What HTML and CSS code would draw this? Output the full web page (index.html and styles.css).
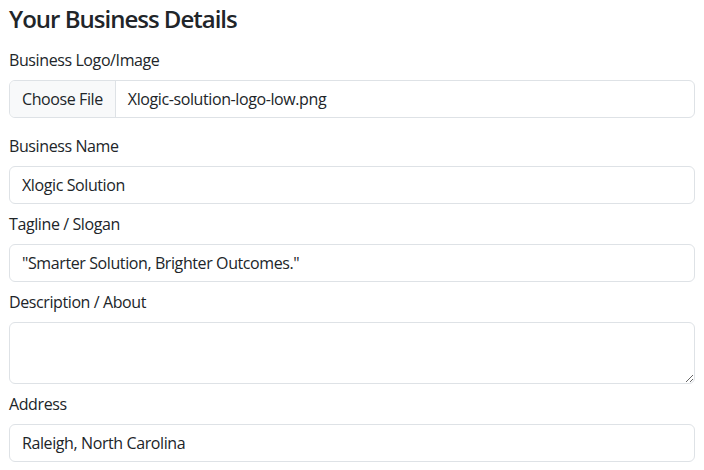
FILE: index.html
```html
<!DOCTYPE html>
<html lang="en">
<head>
<meta charset="utf-8">
<title>Your Business Details</title>
<link rel="stylesheet" href="styles.css">
</head>
<body>
<div class="page">
  <h4 class="title">Your Business Details</h4>
  <div class="group group-first">
    <label class="label">Business Logo/Image</label>
    <div class="file-input">
      <span class="file-btn">Choose File</span>
      <span class="file-name">Xlogic-solution-logo-low.png</span>
    </div>
  </div>
  <div class="group">
    <label class="label" for="bname">Business Name</label>
    <input class="control" id="bname" type="text" value="Xlogic Solution">
  </div>
  <div class="group">
    <label class="label" for="tagline">Tagline / Slogan</label>
    <input class="control" id="tagline" type="text" value="&quot;Smarter Solution, Brighter Outcomes.&quot;">
  </div>
  <div class="group">
    <label class="label" for="desc">Description / About</label>
    <textarea class="control textarea" id="desc" rows="2"></textarea>
  </div>
  <div class="group">
    <label class="label" for="addr">Address</label>
    <input class="control" id="addr" type="text" value="Raleigh, North Carolina">
  </div>
</div>
</body>
</html>
```
FILE: styles.css
```css
html, body {
  margin: 0;
  padding: 0;
  background: #ffffff;
}
body {
  font-family: "Open Sans", "Noto Sans", "Liberation Sans", sans-serif;
  font-size: 16px;
  line-height: 24px;
  letter-spacing: -0.4px;
  color: #212529;
}
.page {
  padding: 4px 9px 0 9px;
}
.title {
  margin: 0 0 15px 0;
  font-size: 24px;
  line-height: 29px;
  font-weight: 600;
  letter-spacing: -1px;
  color: #212529;
}
.group {
  margin-bottom: 8px;
}
.group-first {
  margin-bottom: 16px;
}
.label {
  display: block;
  margin-bottom: 8px;
  font-size: 16px;
  line-height: 24px;
}
.control {
  display: block;
  box-sizing: border-box;
  width: 100%;
  height: 38px;
  margin: 0;
  padding: 6px 12px;
  font-family: inherit;
  font-size: 16px;
  line-height: 24px;
  letter-spacing: -0.4px;
  color: #212529;
  background: #ffffff;
  border: 1px solid #dee2e6;
  border-radius: 6px;
  outline: none;
}
.textarea {
  height: 62px;
  resize: vertical;
}
.file-input {
  display: flex;
  box-sizing: border-box;
  height: 38px;
  border: 1px solid #dee2e6;
  border-radius: 6px;
  overflow: hidden;
}
.file-btn {
  padding: 6px 12px;
  background: #f8f9fa;
  border-right: 1px solid #dee2e6;
  white-space: nowrap;
}
.file-name {
  padding: 6px 12px;
  white-space: nowrap;
}
```
